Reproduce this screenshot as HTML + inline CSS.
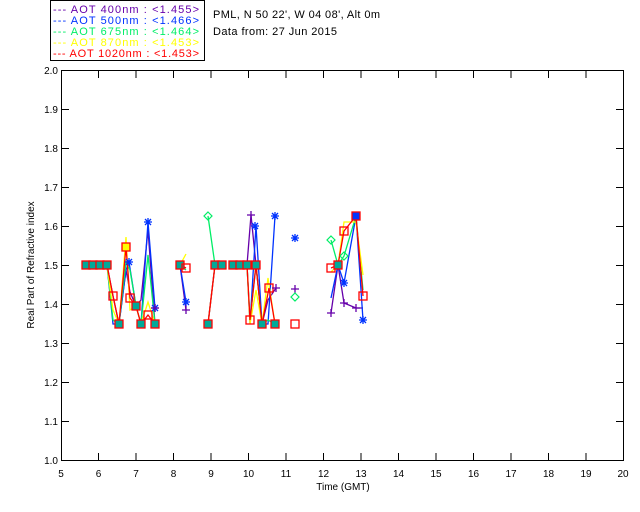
<!DOCTYPE html>
<html><head><meta charset="utf-8"><style>
body{margin:0;background:#fff;width:640px;height:512px;overflow:hidden}
svg{display:block;font-family:"Liberation Sans",sans-serif}
</style></head><body>
<svg width="640" height="512" viewBox="0 0 640 512">
<rect x="50.5" y="0.5" width="154" height="60" fill="#fff" stroke="#000"/>
<g font-size="11">
<text x="53" y="13" fill="#6600aa" textLength="146" lengthAdjust="spacing">--- AOT  400nm : &lt;1.455&gt;</text>
<text x="53" y="24" fill="#0033ff" textLength="146" lengthAdjust="spacing">--- AOT  500nm : &lt;1.466&gt;</text>
<text x="53" y="35" fill="#00ee66" textLength="146" lengthAdjust="spacing">--- AOT  675nm : &lt;1.464&gt;</text>
<text x="53" y="46" fill="#ffff00" textLength="146" lengthAdjust="spacing">--- AOT  870nm : &lt;1.453&gt;</text>
<text x="53" y="57" fill="#ff0000" textLength="146" lengthAdjust="spacing">--- AOT 1020nm : &lt;1.453&gt;</text>
<text x="213" y="18" fill="#000" textLength="167" lengthAdjust="spacing">PML, N 50 22', W 04 08', Alt 0m</text>
<text x="213" y="35" fill="#000" textLength="124" lengthAdjust="spacing">Data from: 27 Jun 2015</text>
</g>
<rect x="61.5" y="70.5" width="562" height="390" fill="none" stroke="#000"/>
<g stroke="#000">
<path d="M98.5 460v-7M136 460v-7M173.5 460v-7M211 460v-7M248.5 460v-7M286 460v-7M323.5 460v-7M361 460v-7M398.5 460v-7M436 460v-7M473.5 460v-7M511 460v-7M548.5 460v-7M586 460v-7
M98.5 71v7M136 71v7M173.5 71v7M211 71v7M248.5 71v7M286 71v7M323.5 71v7M361 71v7M398.5 71v7M436 71v7M473.5 71v7M511 71v7M548.5 71v7M586 71v7
M62 109.5h7M62 148.5h7M62 187.5h7M62 226.5h7M62 265.5h7M62 304.5h7M62 343.5h7M62 382.5h7M62 421.5h7
M623 109.5h-7M623 148.5h-7M623 187.5h-7M623 226.5h-7M623 265.5h-7M623 304.5h-7M623 343.5h-7M623 382.5h-7M623 421.5h-7"/>
</g>
<g font-size="10" text-anchor="end" fill="#000">
<text x="58" y="74">2.0</text><text x="58" y="113">1.9</text><text x="58" y="152">1.8</text><text x="58" y="191">1.7</text><text x="58" y="230">1.6</text><text x="58" y="269">1.5</text><text x="58" y="308">1.4</text><text x="58" y="347">1.3</text><text x="58" y="386">1.2</text><text x="58" y="425">1.1</text><text x="58" y="464">1.0</text>
</g>
<g font-size="10" text-anchor="middle" fill="#000">
<text x="61" y="477">5</text><text x="98.5" y="477">6</text><text x="136" y="477">7</text><text x="173.5" y="477">8</text><text x="211" y="477">9</text><text x="248.5" y="477">10</text><text x="286" y="477">11</text><text x="323.5" y="477">12</text><text x="361" y="477">13</text><text x="398.5" y="477">14</text><text x="436" y="477">15</text><text x="473.5" y="477">16</text><text x="511" y="477">17</text><text x="548.5" y="477">18</text><text x="586" y="477">19</text><text x="623" y="477">20</text>
<text x="343" y="490">Time (GMT)</text>
<text transform="translate(34 265) rotate(-90)">Real Part of Refractive index</text>
</g>
<g fill="none" stroke-width="1.3">
<polyline stroke="#6600aa" points="86,265 107,265 113,296 119,324 126,270 130,292 136,306 141,300 148,230 155,324"/>
<polyline stroke="#6600aa" points="180,265 186,310"/>
<polyline stroke="#6600aa" points="208,324 215,265 222,265"/>
<polyline stroke="#6600aa" points="233,265 247,265 251,215 256,265 262,324 268,300 276,288"/>
<polyline stroke="#6600aa" points="331,313 338,265 344,303 356,308 363,308"/>
<polyline stroke="#0033ff" points="86,265 107,265 113,324 119,324 126,270 129,262 136,306 141,324 148,222 155,308"/>
<polyline stroke="#0033ff" points="180,265 186,302"/>
<polyline stroke="#0033ff" points="208,324 215,265 222,265"/>
<polyline stroke="#0033ff" points="233,265 247,265 250,324 256,226 262,324 268,324 275,216"/>
<polyline stroke="#0033ff" points="331,298 338,265 344,283 356,216 363,320"/>
<polyline stroke="#00ee66" points="86,265 107,265 113,320 119,324 126,262 130,270 136,306 141,324 148,255 155,324"/>
<polyline stroke="#00ee66" points="180,265 186,270"/>
<polyline stroke="#00ee66" points="208,216 215,265 222,265"/>
<polyline stroke="#00ee66" points="233,265 247,265 250,320 256,265 262,324 268,320 275,324"/>
<polyline stroke="#00ee66" points="331,240 338,265 344,256 356,216 363,290"/>
<polyline stroke="#ffff00" points="86,265 107,265 113,310 119,324 126,237 130,310 136,306 141,324 148,302 155,324"/>
<polyline stroke="#ffff00" points="180,265 186,254"/>
<polyline stroke="#ffff00" points="208,324 215,265 222,265"/>
<polyline stroke="#ffff00" points="233,265 247,265 250,324 256,290 262,324 268,278 275,324"/>
<polyline stroke="#ffff00" points="331,272 338,265 344,222 356,222 363,275"/>
<polyline stroke="#ff0000" points="86,265 107,265 113,296 119,324 126,247 130,298 136,306 141,324 148,315 155,324"/>
<polyline stroke="#ff0000" points="180,265 186,268"/>
<polyline stroke="#ff0000" points="208,324 215,265 222,265"/>
<polyline stroke="#ff0000" points="233,265 247,265 250,320 256,265 262,324 269,288 275,324"/>
<polyline stroke="#ff0000" points="331,268 338,265 344,231 356,216 363,296"/>
</g>
<g fill="#00aa99" stroke="#ff0000" stroke-width="1.3">
<rect x="82" y="261" width="8" height="8"/><rect x="89" y="261" width="8" height="8"/><rect x="96" y="261" width="8" height="8"/><rect x="103" y="261" width="8" height="8"/>
<rect x="109" y="292" width="8" height="8" fill="none"/><rect x="115" y="320" width="8" height="8"/><rect x="122" y="243" width="8" height="8" fill="#ffff00"/><rect x="126" y="294" width="8" height="8" fill="none"/><rect x="132" y="302" width="8" height="8"/><rect x="137" y="320" width="8" height="8"/><rect x="144" y="311" width="8" height="8" fill="none"/><rect x="151" y="320" width="8" height="8"/>
<rect x="176" y="261" width="8" height="8"/><rect x="182" y="264" width="8" height="8" fill="none"/>
<rect x="204" y="320" width="8" height="8"/><rect x="211" y="261" width="8" height="8"/><rect x="218" y="261" width="8" height="8"/>
<rect x="229" y="261" width="8" height="8"/><rect x="236" y="261" width="8" height="8"/><rect x="243" y="261" width="8" height="8"/><rect x="246" y="316" width="8" height="8" fill="none"/><rect x="252" y="261" width="8" height="8"/><rect x="258" y="320" width="8" height="8"/><rect x="265" y="284" width="8" height="8" fill="none"/><rect x="271" y="320" width="8" height="8"/>
<rect x="291" y="320" width="8" height="8" fill="none"/>
<rect x="327" y="264" width="8" height="8" fill="none"/><rect x="334" y="261" width="8" height="8"/><rect x="340" y="227" width="8" height="8" fill="none"/><rect x="352" y="212" width="8" height="8" fill="#0033ff"/><rect x="359" y="292" width="8" height="8" fill="none"/>
</g>
<g stroke="#0033ff" stroke-width="1.3" fill="none">
<path d="M144 222h8M148 218v8M145 219l6 6M151 219l-6 6 M125 262h8M129 258v8M126 259l6 6M132 259l-6 6 M151 308h8M155 304v8M152 305l6 6M158 305l-6 6 M182 302h8M186 298v8M183 299l6 6M189 299l-6 6 M251 226h8M255 222v8M252 223l6 6M258 223l-6 6 M271 216h8M275 212v8M272 213l6 6M278 213l-6 6 M291 238h8M295 234v8M292 235l6 6M298 235l-6 6 M340 283h8M344 279v8M341 280l6 6M347 280l-6 6 M359 320h8M363 316v8M360 317l6 6M366 317l-6 6"/>
</g>
<g stroke="#6600aa" stroke-width="1.3" fill="none">
<path d="M247 215h8M251 211v8 M272 288h8M276 284v8 M182 310h8M186 306v8 M151 308h8M155 304v8 M291 289h8M295 285v8 M327 313h8M331 309v8 M340 303h8M344 299v8 M352 308h8M356 304v8"/>
</g>
<g stroke="#00ee66" stroke-width="1.2" fill="none">
<path d="M208 212l4 4-4 4-4-4z M295 293l4 4-4 4-4-4z M331 236l4 4-4 4-4-4z M344 252l4 4-4 4-4-4z"/>
</g>
</svg>
</body></html>
